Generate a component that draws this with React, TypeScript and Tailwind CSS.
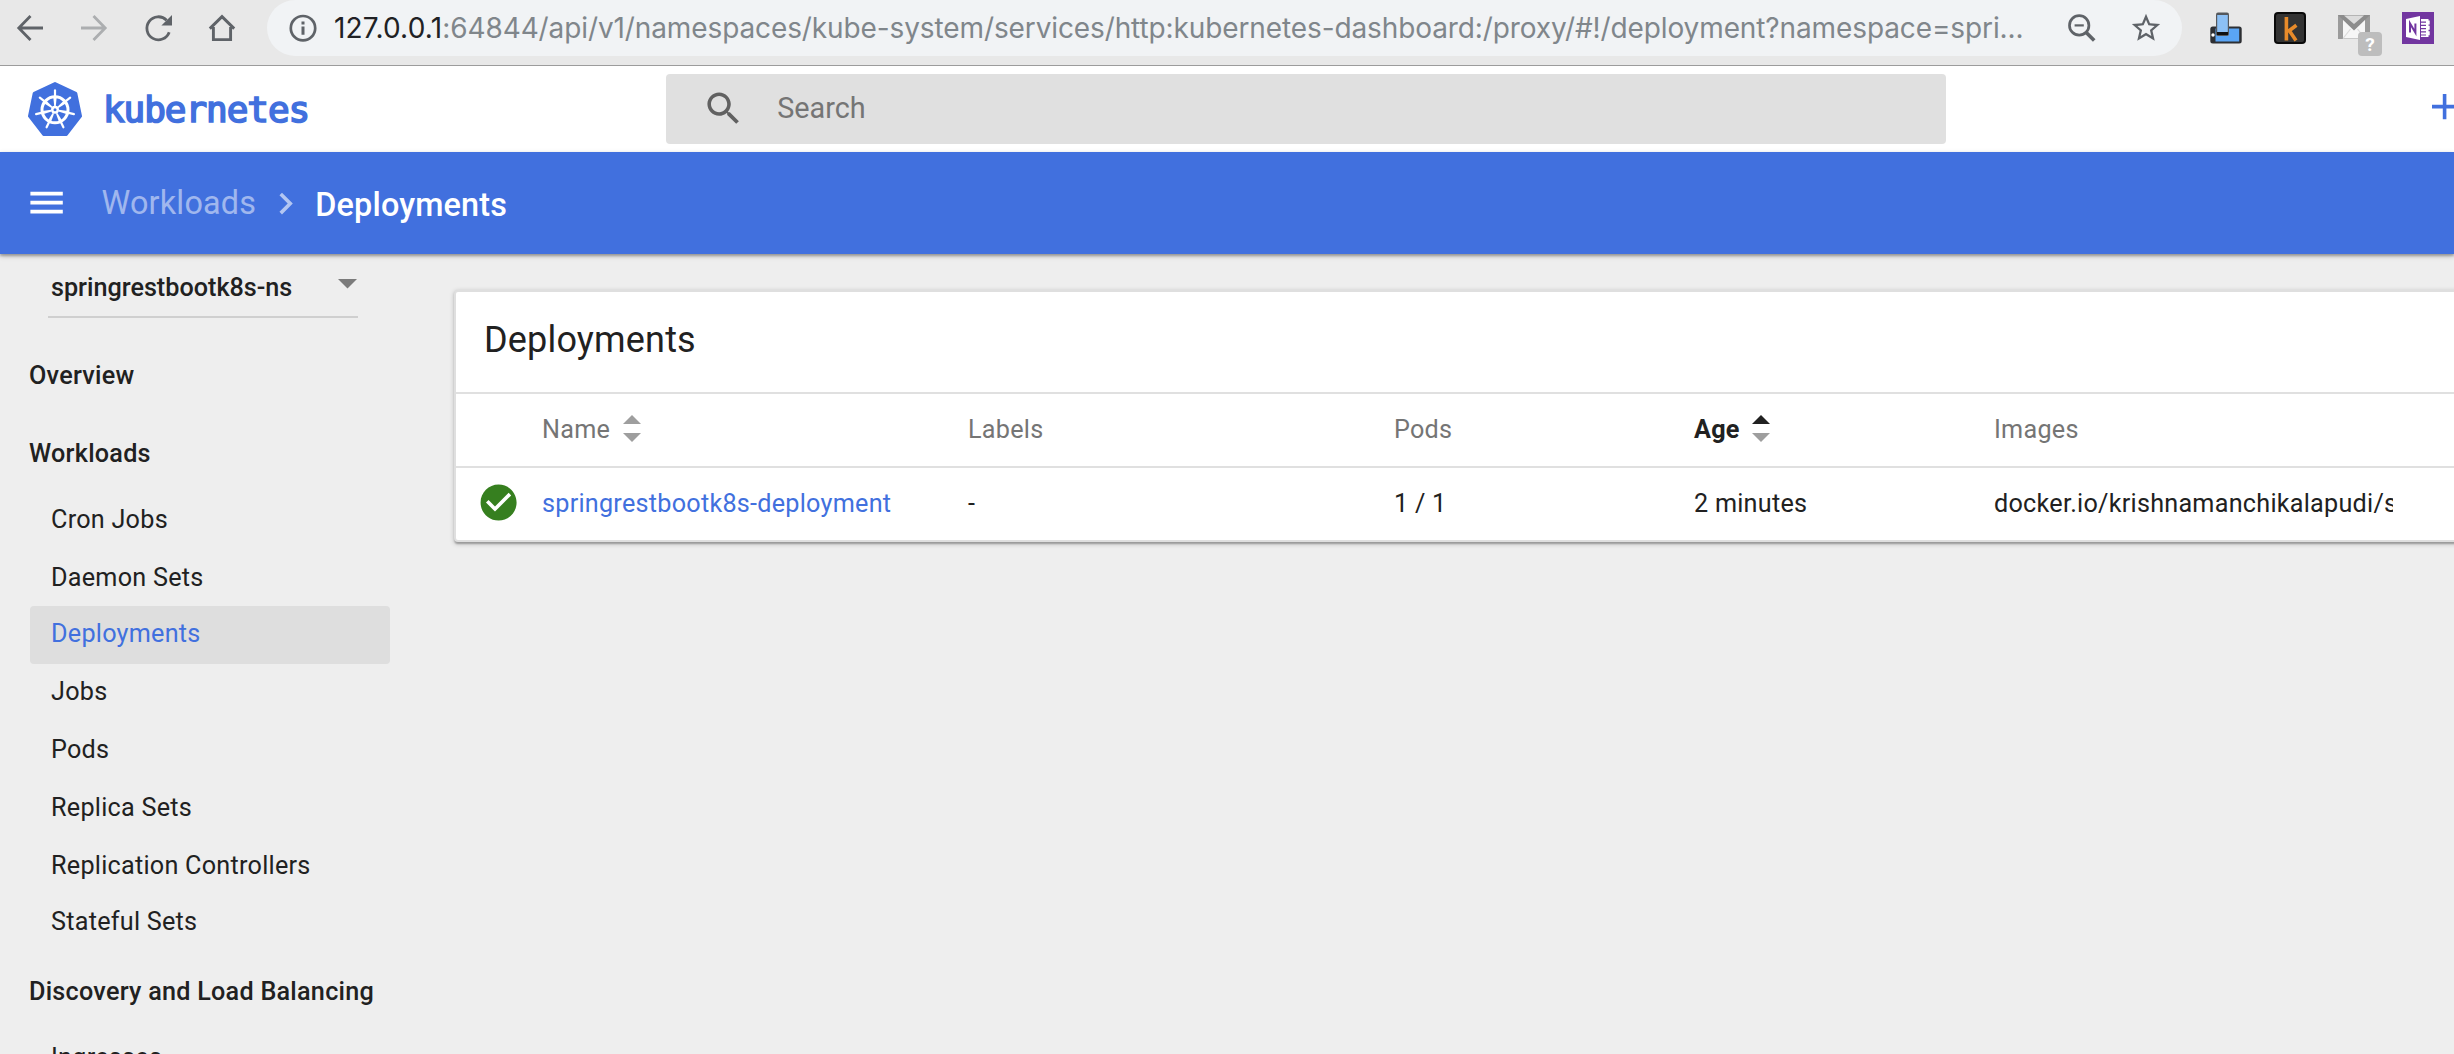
import type { ReactNode } from "react";

const URL_REST =
  ":64844/api/v1/namespaces/kube-system/services/http:kubernetes-dashboard:/proxy/#!/deployment?namespace=spri...";

function Arrow({ flip, color }: { flip?: boolean; color: string }) {
  return (
    <svg viewBox="0 0 32 32" className={`size-8 shrink-0 ${flip ? "-scale-x-100" : ""} ${color}`} fill="none" stroke="currentColor" strokeWidth="2.8">
      <path d="M29 16H5M16.5 4 4.8 16l11.7 12" />
    </svg>
  );
}

function Reload() {
  return (
    <svg viewBox="0 0 32 32" className="size-8 shrink-0 text-[#5f6368]" fill="none" stroke="currentColor" strokeWidth="2.8">
      <path d="M27.2 20.2A11.5 11.5 0 1 1 24.6 8.2" />
      <path d="M30 3v10.6H19.4z" fill="currentColor" stroke="none" />
    </svg>
  );
}

function Home() {
  return (
    <svg viewBox="0 0 32 32" className="size-8 shrink-0 text-[#5f6368]" fill="none" stroke="currentColor" strokeWidth="2.9">
      <path d="M3.8 16.6 16 4.6l12.2 12M7.4 15v12.6h17.2V15" />
    </svg>
  );
}

function Info() {
  return (
    <svg viewBox="0 0 32 32" className="size-8 shrink-0 text-[#5f6368]" fill="none" stroke="currentColor" strokeWidth="2.7">
      <circle cx="16" cy="16.2" r="12.2" />
      <path d="M16 14.6v8.2M16 9.6v3" strokeWidth="3" />
    </svg>
  );
}

function ZoomOut() {
  return (
    <svg viewBox="0 0 32 32" className="size-8 shrink-0 text-[#5f6368]" fill="none" stroke="currentColor" strokeWidth="2.7">
      <circle cx="13.2" cy="13.4" r="9.7" />
      <path d="M8.6 13.4h9.2" strokeWidth="2.2" />
      <path d="m20.2 20.4 8 8" strokeWidth="3.6" />
    </svg>
  );
}

function Star() {
  return (
    <svg viewBox="0 0 24 24" className="-mx-px size-[34px] shrink-0 text-[#5f6368]" fill="currentColor">
      <path d="m22 9.24-7.19-.62L12 2 9.19 8.63 2 9.24l5.46 4.73L5.82 21 12 17.27 18.18 21l-1.63-7.03zM12 15.4l-3.76 2.27 1-4.28-3.32-2.88 4.38-.38L12 6.1l1.71 4.04 4.38.38-3.32 2.88 1 4.28z" />
    </svg>
  );
}

function DevicesExtension() {
  return (
    <svg viewBox="0 0 32 32" className="size-8 shrink-0">
      <rect x="0.3" y="14.5" width="31.4" height="17" rx="2.5" fill="#2d2f33" />
      <rect x="5.5" y="16.5" width="23.7" height="13" fill="#5aa5f5" />
      <circle cx="3" cy="23" r="1.7" fill="#fff" />
      <rect x="6" y="0.5" width="13" height="23.5" rx="2" fill="#55585c" />
      <rect x="7.2" y="3" width="10.6" height="17" fill="#8cc0f5" />
      <rect x="7" y="20" width="11" height="3" fill="#111" />
    </svg>
  );
}

function KExtension() {
  return (
    <svg viewBox="0 0 32 32" className="size-8 shrink-0">
      <rect width="32" height="32" rx="4" fill="#0a0a0a" />
      <rect x="2" y="2" width="28" height="28" rx="2" fill="#333" />
      <path d="M12.4 5v23.5M22.4 13.2l-8.6 6.6M15.2 18.4l6.8 10" stroke="#e88b2a" strokeWidth="3.6" fill="none" />
    </svg>
  );
}

function MailExtension() {
  return (
    <div className="relative size-8 shrink-0">
      <svg viewBox="0 0 32 32" className="size-8">
        <rect y="3" width="32" height="24" fill="#9b9b9b" />
        <rect x="5" y="5" width="22" height="21.5" fill="#f6f6f6" />
        <path d="M5 26.5 12.5 17M27 26.5 19.5 17" stroke="#dadada" strokeWidth="1.2" />
        <path d="M0 3h32l-3 3-13 12.5L3 6z" fill="#8c8c8c" />
        <path d="M6 3.5h20L16 12z" fill="#dcdcdc" />
      </svg>
      <span className="absolute top-5 left-5 flex size-6 items-center justify-center rounded-[4px] bg-[#bdbdbd] font-['Roboto',sans-serif] text-[19px] leading-none font-bold text-white">
        ?
      </span>
    </div>
  );
}

function NotesExtension() {
  return (
    <svg viewBox="0 0 32 32" className="size-8 shrink-0">
      <rect width="32" height="32" fill="#7236a0" />
      <path d="M4 7 18 4v24L4 25z" fill="#fff" />
      <path d="M19 7h7.5v18H19z" fill="#fff" />
      <path d="M19 10.2h5M19 13.4h5M19 16.6h5M19 19.8h5M19 23h5" stroke="#7236a0" strokeWidth="1.2" />
      <path d="M26.2 8.4v15.2" stroke="#fff" strokeWidth="3" strokeDasharray="4 1.4" />
      <path d="M8 20.6v-9.2l5.4 9.2v-9.2" stroke="#7236a0" strokeWidth="2" fill="none" />
    </svg>
  );
}

function KubernetesLogo() {
  const angles = [0, 1, 2, 3, 4, 5, 6].map((i) => (i * 360) / 7);
  return (
    <svg viewBox="0 0 54 54" className="size-[54px] shrink-0">
      <path
        d="M27 1.6 47.8 11.4 52.5 34 38.4 52.4H15.6L1.5 34 6.2 11.4z"
        fill="#4170de"
        stroke="#4170de"
        strokeWidth="3"
        strokeLinejoin="round"
      />
      <g stroke="#fff" fill="none">
        <circle cx="27" cy="27.8" r="13" strokeWidth="3" />
        {angles.map((a) => (
          <g key={a} transform={`rotate(${a} 27 27.8)`}>
            <path d="M27 14.8V8.4" strokeWidth="2.2" strokeLinecap="round" />
            <path d="M25.3 15 26.2 24h1.6L28.7 15z" fill="#fff" stroke="none" />
          </g>
        ))}
        <circle cx="27" cy="27.8" r="4" fill="#fff" stroke="none" />
        <circle cx="27" cy="27.8" r="1.5" fill="#4170de" stroke="none" />
      </g>
    </svg>
  );
}

function Material({ d, className }: { d: string; className: string }) {
  return (
    <svg viewBox="0 0 24 24" fill="currentColor" className={`size-[43.2px] shrink-0 ${className}`}>
      <path d={d} />
    </svg>
  );
}

function SortArrows({ up }: { up: string }) {
  return (
    <svg viewBox="0 0 18 27" className="mb-[3px] h-[27px] w-[18px]">
      <path d="M0 9 9 0l9 9z" fill={up} />
      <path d="M0 18h18l-9 9z" fill="#9e9e9e" />
    </svg>
  );
}

function BrowserBar() {
  return (
    <div className="flex h-[66px] shrink-0 items-start border-b border-[#9c9c9c] bg-[#e8e8e8] pl-[14px]">
      <div className="flex h-14 items-center gap-8">
        <Arrow color="text-[#5f6368]" />
        <Arrow flip color="text-[#acaeb0]" />
        <Reload />
        <Home />
      </div>
      <div className="ml-[29px] flex h-14 w-[1915px] items-center rounded-full bg-[#f1f3f5] px-5">
        <Info />
        <p className="ml-[15px] flex-1 font-['Inter',sans-serif] text-[28px] whitespace-nowrap text-[#80868b]">
          <span className="tracking-[0.2px] text-[#202124]">127.0.0.1</span>
          <span className="tracking-[-0.11px]">{URL_REST}</span>
        </p>
        <div className="flex items-center gap-8">
          <ZoomOut />
          <Star />
        </div>
      </div>
      <div className="ml-7 flex h-14 items-center gap-8">
        <DevicesExtension />
        <KExtension />
        <MailExtension />
        <NotesExtension />
      </div>
    </div>
  );
}

function Header() {
  return (
    <header className="flex h-[86px] shrink-0 items-center bg-white">
      <div className="flex w-[666px] shrink-0 items-center pl-7">
        <KubernetesLogo />
        <span className="ml-[21px] pt-[2px] font-['DejaVu_Sans_Mono',monospace] text-[36px] leading-[42px] tracking-[-1.05px] text-[#4170de] [-webkit-text-stroke:1.7px_#4170de]">
          kubernetes
        </span>
      </div>
      <div className="flex h-[70px] w-[1280px] shrink-0 items-center rounded bg-[#e0e0e0] pl-[36px]">
        <Material
          className="mb-px text-[#616161]"
          d="M15.5 14h-.79l-.28-.27C15.41 12.59 16 11.11 16 9.5 16 5.91 13.09 3 9.5 3S3 5.91 3 9.5 5.91 16 9.5 16c1.61 0 3.09-.59 4.23-1.57l.27.28v.79l5 4.99L20.49 19zm-6 0C7.01 14 5 11.99 5 9.5S7.01 5 9.5 5 14 7.01 14 9.5 11.99 14 9.5 14z"
        />
        <span className="mb-0.5 ml-8 text-[28.8px] leading-none text-[#757575]">Search</span>
      </div>
      <Material className="mb-[5px] ml-[477px] text-[#4170de]" d="M19 13h-6v6h-2v-6H5v-2h6V5h2v6h6z" />
    </header>
  );
}

function Breadcrumbs() {
  return (
    <div className="relative z-10 flex h-[102px] shrink-0 items-center bg-[#4170de] pl-[25.4px] text-[32.4px] leading-none tracking-[0.005em] text-white shadow-[0_2px_5px_rgba(0,0,0,0.26),0_2px_2px_rgba(0,0,0,0.2)]">
      <Material className="" d="M3 18h18v-2H3v2zm0-5h18v-2H3v2zm0-7v2h18V6H3z" />
      <span className="mt-px ml-[33px] text-white/50">Workloads</span>
      <Material className="mt-[2px] ml-[8px] text-white/60" d="M10 6 8.59 7.41 13.17 12l-4.58 4.59L10 18l6-6z" />
      <span className="mt-1 ml-[8px] font-medium">Deployments</span>
    </div>
  );
}

function Group({ className, children }: { className: string; children: ReactNode }) {
  return (
    <div className={`h-[58px] pt-[11px] pl-[29px] font-medium leading-[34px] whitespace-nowrap ${className}`}>{children}</div>
  );
}

function Item({ children, active, short }: { children: ReactNode; active?: boolean; short?: boolean }) {
  return (
    <div
      className={`ml-[30px] w-[360px] rounded pt-[11px] pl-[21px] leading-[34px] whitespace-nowrap ${short ? "h-14" : "h-[58px]"} ${
        active ? "bg-[#dedede] text-[#4170de]" : ""
      }`}
    >
      {children}
    </div>
  );
}

function Sidebar() {
  return (
    <nav className="w-[454px] shrink-0 pt-[17px] tracking-[0.01em]">
      <div className="ml-12 flex h-[47px] w-[310px] items-start justify-between border-b-2 border-[#cfcfcf] pl-[3px] leading-[34px] font-medium tracking-normal">
        springrestbootk8s-ns
        <svg viewBox="0 0 20 10" className="mt-[8px] h-[10px] w-5 text-[#7b7b7b]" fill="currentColor">
          <path d="M0 0h19l-9.5 9.6z" />
        </svg>
      </div>
      <Group className="mt-[30px]">Overview</Group>
      <Group className="mt-5">Workloads</Group>
      <div className="mt-2">
        <Item>Cron Jobs</Item>
        <Item short>Daemon Sets</Item>
        <Item active>Deployments</Item>
        <Item>Jobs</Item>
        <Item>Pods</Item>
        <Item>Replica Sets</Item>
        <Item short>Replication Controllers</Item>
        <Item>Stateful Sets</Item>
      </div>
      <Group className="mt-3">Discovery and Load Balancing</Group>
      <div className="mt-2">
        <Item>Ingresses</Item>
      </div>
    </nav>
  );
}

function DeploymentsCard() {
  const columns = "grid grid-cols-[86px_426px_426px_300px_300px_399px] items-center";
  return (
    <section className="mt-9 h-[252px] w-[2100px] shrink-0 rounded border-2 border-[#dfdfdf] bg-white tracking-[0.01em] shadow-[0_1.8px_5.4px_rgba(0,0,0,0.2),0_1.8px_1.8px_rgba(0,0,0,0.14),0_3.6px_1.8px_-1.8px_rgba(0,0,0,0.12)]">
      <h1 className="flex h-[102px] items-center border-b-2 border-[#e0e0e0] pb-1 pl-[28px] text-[36px] leading-none tracking-[0.005em]">
        Deployments
      </h1>
      <div className={`h-[74px] border-b-2 border-[#e0e0e0] text-[#757575] ${columns}`}>
        <span />
        <span className="flex items-center gap-[12.5px]">
          Name
          <SortArrows up="#9e9e9e" />
        </span>
        <span>Labels</span>
        <span>Pods</span>
        <span className="flex items-center gap-3 font-bold text-[#212121]">
          Age
          <SortArrows up="#212121" />
        </span>
        <span>Images</span>
      </div>
      <div className={`h-[72px] ${columns}`}>
        <Material
          className="mb-[3px] ml-[21px] text-[#367f1f]"
          d="M12 2C6.48 2 2 6.48 2 12s4.48 10 10 10 10-4.48 10-10S17.52 2 12 2zm-2 15-5-5 1.41-1.41L10 14.17l7.59-7.59L19 8z"
        />
        <a className="text-[#4170de]">springrestbootk8s-deployment</a>
        <span>-</span>
        <span>1 / 1</span>
        <span>2 minutes</span>
        <span className="overflow-hidden whitespace-nowrap">docker.io/krishnamanchikalapudi/springrestbootk8s</span>
      </div>
    </section>
  );
}

export default function App() {
  return (
    <div className="flex h-[1054px] w-full flex-col overflow-hidden bg-[#eee] font-['Roboto',sans-serif] text-[25.2px] text-[#212121]">
      <BrowserBar />
      <Header />
      <Breadcrumbs />
      <div className="flex min-h-0 flex-1 items-start overflow-hidden">
        <Sidebar />
        <DeploymentsCard />
      </div>
    </div>
  );
}
